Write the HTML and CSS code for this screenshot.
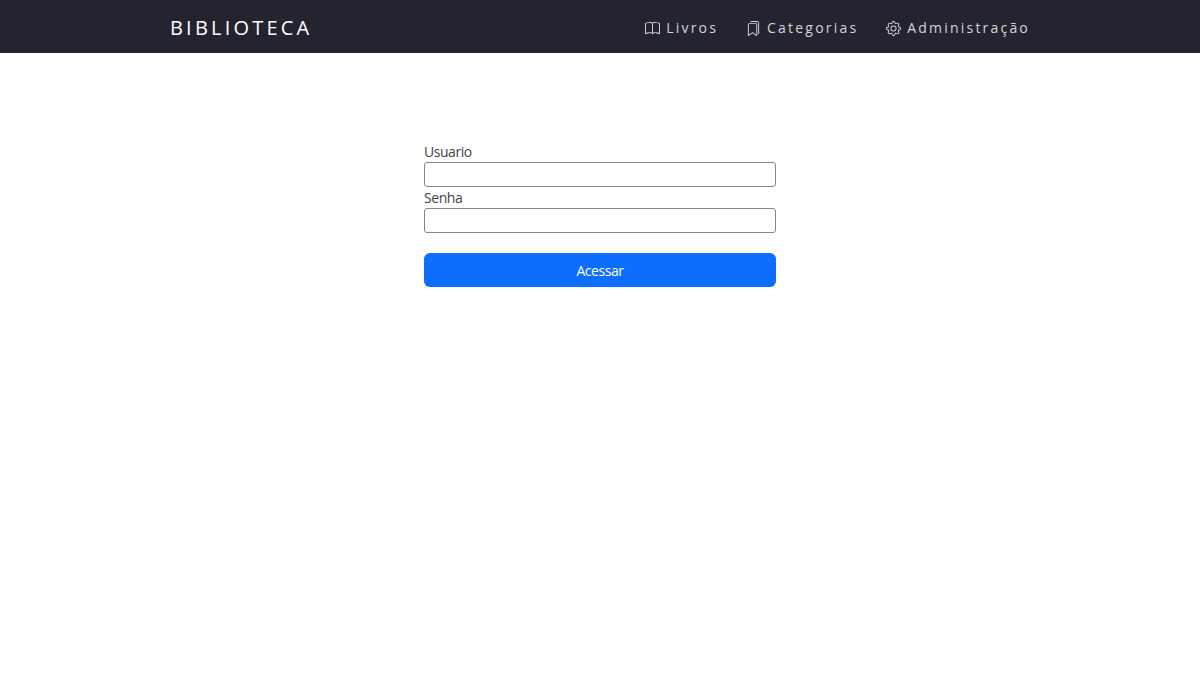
FILE: index.html
```html
<!DOCTYPE html>
<html lang="pt-BR">
<head>
  <meta charset="UTF-8" />
  <meta name="viewport" content="width=device-width, initial-scale=1.0" />
  <title>Biblioteca</title>
  <link rel="stylesheet" href="styles.css">
</head>
<body>
  <nav class="navbar">
    <a href="#" class="marca">BIBLIOTECA</a>
    <ul class="menu">
      <li>
        <a href="#">
          <svg class="icone" viewBox="0 0 16 16" fill="currentColor"><path d="M1 2.828c.885-.37 2.154-.769 3.388-.893 1.33-.134 2.458.063 3.112.752v9.746c-.935-.53-2.12-.603-3.213-.493-1.18.12-2.37.461-3.287.811V2.828zm7.5-.141c.654-.689 1.782-.886 3.112-.752 1.234.124 2.503.523 3.388.893v9.923c-.918-.35-2.107-.692-3.287-.81-1.094-.111-2.278-.039-3.213.492V2.687zM8 1.783C7.015.936 5.587.81 4.287.94c-1.514.153-3.042.672-3.994 1.105A.5.5 0 0 0 0 2.5v11a.5.5 0 0 0 .707.455c.882-.4 2.303-.881 3.68-1.02 1.409-.142 2.59.087 3.223.877a.5.5 0 0 0 .78 0c.633-.79 1.814-1.019 3.222-.877 1.378.139 2.8.62 3.681 1.02A.5.5 0 0 0 16 13.5v-11a.5.5 0 0 0-.293-.455c-.952-.433-2.48-.952-3.994-1.105C10.413.809 8.985.936 8 1.783z"/></svg>
          Livros
        </a>
      </li>
      <li>
        <a href="#">
          <svg class="icone" viewBox="0 0 16 16" fill="currentColor"><path d="M2 4a2 2 0 0 1 2-2h6a2 2 0 0 1 2 2v11.5a.5.5 0 0 1-.777.416L7 13.101l-4.223 2.815A.5.5 0 0 1 2 15.5V4zm2-1a1 1 0 0 0-1 1v10.566l3.723-2.482a.5.5 0 0 1 .554 0L11 14.566V4a1 1 0 0 0-1-1H4z"/><path d="M4.268 1H12a1 1 0 0 1 1 1v11.768l.223.148A.5.5 0 0 0 14 13.5V2a2 2 0 0 0-2-2H6a2 2 0 0 0-1.732 1z"/></svg>
          Categorias
        </a>
      </li>
      <li>
        <a href="#">
          <svg class="icone" viewBox="0 0 16 16" fill="currentColor"><path d="M8 4.754a3.246 3.246 0 1 0 0 6.492 3.246 3.246 0 0 0 0-6.492zM5.754 8a2.246 2.246 0 1 1 4.492 0 2.246 2.246 0 0 1-4.492 0z"/><path d="M9.796 1.343c-.527-1.79-3.065-1.79-3.592 0l-.094.319a.873.873 0 0 1-1.255.52l-.292-.16c-1.64-.892-3.433.902-2.54 2.541l.159.292a.873.873 0 0 1-.52 1.255l-.319.094c-1.79.527-1.79 3.065 0 3.592l.319.094a.873.873 0 0 1 .52 1.255l-.16.292c-.892 1.64.901 3.434 2.541 2.54l.292-.159a.873.873 0 0 1 1.255.52l.094.319c.527 1.79 3.065 1.79 3.592 0l.094-.319a.873.873 0 0 1 1.255-.52l.292.16c1.64.893 3.434-.902 2.54-2.541l-.159-.292a.873.873 0 0 1 .52-1.255l.319-.094c1.79-.527 1.79-3.065 0-3.592l-.319-.094a.873.873 0 0 1-.52-1.255l.16-.292c.893-1.64-.902-3.433-2.541-2.54l-.292.159a.873.873 0 0 1-1.255-.52l-.094-.319zm-2.633.283c.246-.835 1.428-.835 1.674 0l.094.319a1.873 1.873 0 0 0 2.693 1.115l.291-.16c.764-.415 1.6.42 1.184 1.185l-.159.292a1.873 1.873 0 0 0 1.116 2.692l.318.094c.835.246.835 1.428 0 1.674l-.319.094a1.873 1.873 0 0 0-1.115 2.693l.16.291c.415.764-.42 1.6-1.185 1.184l-.291-.159a1.873 1.873 0 0 0-2.693 1.116l-.094.318c-.246.835-1.428.835-1.674 0l-.094-.319a1.873 1.873 0 0 0-2.692-1.115l-.292.16c-.764.415-1.6-.42-1.184-1.185l.159-.291A1.873 1.873 0 0 0 1.945 8.93l-.319-.094c-.835-.246-.835-1.428 0-1.674l.319-.094A1.873 1.873 0 0 0 3.06 4.377l-.16-.292c-.415-.764.42-1.6 1.185-1.184l.292.159a1.873 1.873 0 0 0 2.692-1.115l.094-.319z"/></svg>
          Administração
        </a>
      </li>
    </ul>
  </nav>

  <form class="login">
    <label for="usuario">Usuario</label>
    <input type="text" id="usuario" />

    <label for="senha">Senha</label>
    <input type="password" id="senha" />

    <button type="submit">Acessar</button>
  </form>
</body>
</html>
```

FILE: styles.css
```css
body {
  margin: 0;
  font-family: 'Open Sans', 'Noto Sans', sans-serif;
  background-color: #fff;
  color: #444;
}

.navbar {
  display: flex;
  align-items: center;
  justify-content: space-between;
  height: 53px;
  padding: 2px 170px 0;
  background-color: #23242f;
  box-sizing: border-box;
}

.marca {
  color: #fff;
  font-size: 20px;
  letter-spacing: 3.2px;
  text-decoration: none;
}

.menu {
  display: flex;
  gap: 28px;
  margin: 0;
  padding: 0;
  list-style: none;
}

.menu a {
  display: flex;
  align-items: center;
  gap: 6px;
  color: #d4d5d8;
  font-size: 14px;
  letter-spacing: 2.2px;
  text-decoration: none;
}

.icone {
  width: 15px;
  height: 15px;
  margin-top: 2px;
}

.login {
  display: flex;
  flex-direction: column;
  width: 352px;
  margin: 90px auto 0;
}

label {
  font-size: 14px;
  letter-spacing: -0.45px;
  line-height: 18px;
  height: 19px;
}

input {
  height: 25px;
  padding: 1px 2px;
  border: 1px solid #858585;
  border-radius: 3px;
  box-sizing: border-box;
  margin-bottom: 2px;
  outline: none;
}

button {
  height: 34px;
  margin-top: 18px;
  background-color: #0d6efd;
  color: #fff;
  border: none;
  border-radius: 6px;
  font-family: inherit;
  font-size: 14px;
  letter-spacing: -0.45px;
  cursor: pointer;
}
```
